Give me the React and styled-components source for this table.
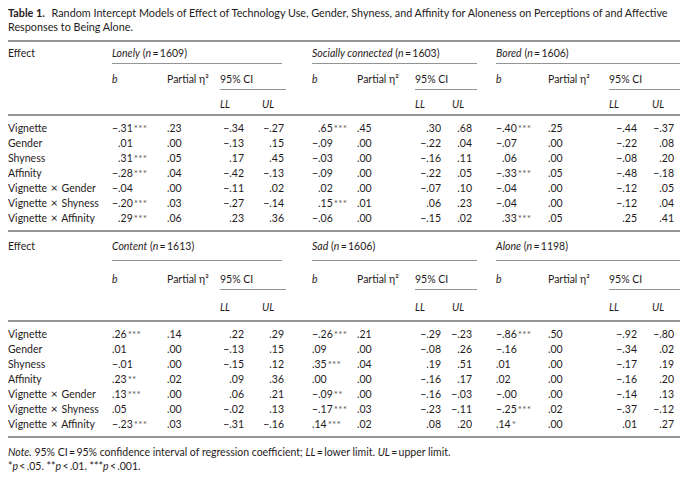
import React from "react";
import styled, { createGlobalStyle, css } from "styled-components";

const Global = createGlobalStyle`
  html, body { margin: 0; padding: 0; background: #fff; }
  body { font-family: Lato, "Open Sans", sans-serif; color: #1f1b1c; }
`;

const gridCols = css`
  display: grid;
  grid-template-columns: 104px 55px 53px 30px 36px 26px 45px 58px 32px 30px 19px 52px 61px 34px 37px;
`;

const Page = styled.div`
  padding: 6px 8px 0 8px;
  width: 672px;
  font-size: 10.5px;
`;

const Caption = styled.div`
  font-size: 10.8px;
  line-height: 14px;
  margin-bottom: 6px;
  white-space: nowrap;
  strong { font-weight: 700; margin-right: 4px; }
`;

const Block = styled.div`
  border-top: 2px solid #949494;
`;

const Header = styled.div`
  ${gridCols};
  border-bottom: 2px solid #949494;
  line-height: 14px;
`;

const EffectLabel = styled.div`
  grid-column: 1;
  grid-row: 1;
  padding-top: ${(p) => (p.$tall ? 7 : 4)}px;
`;

const GroupLabel = styled.div`
  grid-column: ${(p) => p.$col} / span 4;
  grid-row: 1;
  padding: ${(p) => (p.$tall ? "7px 0 7px" : "4px 0 3px")};
  border-bottom: 1.5px solid #949494;
  margin-right: ${(p) => p.$trim || 0}px;
  white-space: nowrap;
  em { font-style: italic; }
`;

const SubLabel = styled.div`
  grid-column: ${(p) => p.$col};
  grid-row: 2;
  padding: ${(p) => (p.$tall ? "11px 0 3px" : "8px 0 3px")};
  font-style: ${(p) => (p.$italic ? "italic" : "normal")};
  white-space: nowrap;
`;

const CILabel = styled.div`
  grid-column: ${(p) => p.$col} / span 2;
  grid-row: 2;
  padding: ${(p) => (p.$tall ? "11px 0 3px" : "8px 0 3px")};
  border-bottom: 1.5px solid #949494;
  white-space: nowrap;
`;

const LimitLabel = styled.div`
  grid-column: ${(p) => p.$col};
  grid-row: 3;
  padding: ${(p) => (p.$tall ? "10px 0 6px" : "7px 0 3px")};
  padding-left: ${(p) => p.$indent || 0}px;
  font-style: italic;
`;

const Body = styled.div`
  padding: 5px 0 4px;
  border-bottom: 2px solid #949494;
`;

const Row = styled.div`
  ${gridCols};
  line-height: 15px;
`;

const Name = styled.div`
  grid-column: 1;
  white-space: nowrap;
`;

const Times = styled.span`
  font-size: 12px;
  line-height: 0;
  margin: 0 1px;
`;

const BVal = styled.div`
  white-space: nowrap;
`;

const Hidden = styled.span`
  visibility: hidden;
`;

const Stars = styled.span`
  font-size: 10px;
  letter-spacing: 0.2px;
  color: #5a5a5a;
  margin-left: 1px;
`;

const PVal = styled.div``;

const Limit = styled.div`
  text-align: right;
  padding-right: ${(p) => p.$pad}px;
  white-space: nowrap;
`;

const Spacer = styled.div``;

const Notes = styled.div`
  line-height: 14px;
  padding-top: 7px;
  white-space: nowrap;
  em { font-style: italic; }
`;

const groups1 = [
  { name: "Lonely", n: "1609" },
  { name: "Socially connected", n: "1603" },
  { name: "Bored", n: "1606" },
];
const groups2 = [
  { name: "Content", n: "1613" },
  { name: "Sad", n: "1606" },
  { name: "Alone", n: "1198" },
];

const names = [
  ["Vignette"],
  ["Gender"],
  ["Shyness"],
  ["Affinity"],
  ["Vignette", "Gender"],
  ["Vignette", "Shyness"],
  ["Vignette", "Affinity"],
];

// each row: [b, stars, partial eta, LL, UL] x 3
const data1 = [
  [["−.31", "***", ".23", "−.34", "−.27"], [".65", "***", ".45", ".30", ".68"], ["−.40", "***", ".25", "−.44", "−.37"]],
  [[".01", "", ".00", "−.13", ".15"], ["−.09", "", ".00", "−.22", ".04"], ["−.07", "", ".00", "−.22", ".08"]],
  [[".31", "***", ".05", ".17", ".45"], ["−.03", "", ".00", "−.16", ".11"], [".06", "", ".00", "−.08", ".20"]],
  [["−.28", "***", ".04", "−.42", "−.13"], ["−.09", "", ".00", "−.22", ".05"], ["−.33", "***", ".05", "−.48", "−.18"]],
  [["−.04", "", ".00", "−.11", ".02"], [".02", "", ".00", "−.07", ".10"], ["−.04", "", ".00", "−.12", ".05"]],
  [["−.20", "***", ".03", "−.27", "−.14"], [".15", "***", ".01", ".06", ".23"], ["−.04", "", ".00", "−.12", ".04"]],
  [[".29", "***", ".06", ".23", ".36"], ["−.06", "", ".00", "−.15", ".02"], [".33", "***", ".05", ".25", ".41"]],
];

const data2 = [
  [[".26", "***", ".14", ".22", ".29"], ["−.26", "***", ".21", "−.29", "−.23"], ["−.86", "***", ".50", "−.92", "−.80"]],
  [[".01", "", ".00", "−.13", ".15"], [".09", "", ".00", "−.08", ".26"], ["−.16", "", ".00", "−.34", ".02"]],
  [["−.01", "", ".00", "−.15", ".12"], [".35", "***", ".04", ".19", ".51"], [".01", "", ".00", "−.17", ".19"]],
  [[".23", "**", ".02", ".09", ".36"], [".00", "", ".00", "−.16", ".17"], [".02", "", ".00", "−.16", ".20"]],
  [[".13", "***", ".00", ".06", ".21"], ["−.09", "**", ".00", "−.16", "−.03"], ["−.00", "", ".00", "−.14", ".13"]],
  [[".05", "", ".00", "−.02", ".13"], ["−.17", "***", ".03", "−.23", "−.11"], ["−.25", "***", ".02", "−.37", "−.12"]],
  [["−.23", "***", ".03", "−.31", "−.16"], [".14", "***", ".02", ".08", ".20"], [".14", "*", ".00", ".01", ".27"]],
];

const starts = [2, 7, 12];
const ulIndent = [12, 5, 9];
const ulPad = [2, 5, 6];
const trims = [4, 0, 0];

function TableHeader({ groups, tall }) {
  return (
    <Header>
      <EffectLabel $tall={tall}>Effect</EffectLabel>
      {groups.map((g, i) => (
        <React.Fragment key={g.name}>
          <GroupLabel $col={starts[i]} $tall={tall} $trim={trims[i]}>
            <em>{g.name}</em> (<em>n</em>&thinsp;=&thinsp;{g.n})
          </GroupLabel>
          <SubLabel $col={starts[i]} $italic $tall={tall}>b</SubLabel>
          <SubLabel $col={starts[i] + 1} $tall={tall}>Partial η²</SubLabel>
          <CILabel $col={starts[i] + 2} $tall={tall}>95% CI</CILabel>
          <LimitLabel $col={starts[i] + 2} $tall={tall}>LL</LimitLabel>
          <LimitLabel $col={starts[i] + 3} $indent={ulIndent[i]} $tall={tall}>UL</LimitLabel>
        </React.Fragment>
      ))}
    </Header>
  );
}

function TableBody({ rows, align }) {
  return (
    <Body>
      {rows.map((row, r) => (
        <Row key={r}>
          <Name>
            {names[r][0]}
            {names[r][1] ? (
              <>
                {" "}
                <Times>×</Times> {names[r][1]}
              </>
            ) : null}
          </Name>
          {row.map((c, i) => {
            const neg = c[0].startsWith("−");
            return (
              <React.Fragment key={i}>
                <BVal>
                  {align && !neg ? <Hidden>−</Hidden> : null}
                  {c[0]}
                  {c[1] ? <Stars>{c[1]}</Stars> : null}
                </BVal>
                <PVal>{c[2]}</PVal>
                <Limit $pad={6}>{c[3]}</Limit>
                <Limit $pad={ulPad[i]}>{c[4]}</Limit>
                {i < 2 ? <Spacer /> : null}
              </React.Fragment>
            );
          })}
        </Row>
      ))}
    </Body>
  );
}

export default function App() {
  return (
    <>
      <Global />
      <Page>
        <Caption>
          <strong>Table 1.</strong> Random Intercept Models of Effect of Technology Use, Gender, Shyness, and Affinity for Aloneness on Perceptions of and Affective
          <br />
          Responses to Being Alone.
        </Caption>
        <Block>
          <TableHeader groups={groups1} />
          <TableBody rows={data1} align />
          <TableHeader groups={groups2} tall />
          <TableBody rows={data2} />
        </Block>
        <Notes>
          <em>Note.</em> 95% CI&thinsp;=&thinsp;95% confidence interval of regression coefficient; <em>LL</em>&thinsp;=&thinsp;lower limit. <em>UL</em>&thinsp;=&thinsp;upper limit.
          <br />
          *<em>p</em>&thinsp;&lt;&thinsp;.05. **<em>p</em>&thinsp;&lt;&thinsp;.01. ***<em>p</em>&thinsp;&lt;&thinsp;.001.
        </Notes>
      </Page>
    </>
  );
}
